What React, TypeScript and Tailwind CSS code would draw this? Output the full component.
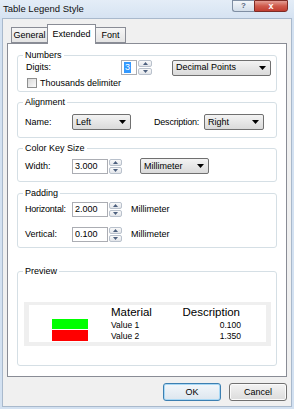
import React from 'react';

// Small Win7-like controls used in the dialog
const Arrow: React.FC<{ up?: boolean }> = ({ up }) => (
  <svg width="5" height="3" viewBox="0 0 5 3" className="block">
    <path d={up ? 'M0 3 L2.5 0 L5 3 Z' : 'M0 0 L5 0 L2.5 3 Z'} fill="#4c5f7d" />
  </svg>
);

const SpinBox: React.FC<{ value: string; w: number; spinW: number; selected?: boolean }> = ({ value, w, spinW, selected }) => (
  <div className="flex items-center gap-[1px]">
    <div
      className="h-[15px] border border-[#abadb3] bg-white flex items-center pl-[2px] text-[9px] leading-[11px]"
      style={{ width: w }}
    >
      {selected ? <span className="bg-[#3399ff] text-white px-[1px]">{value}</span> : value}
    </div>
    <div className="flex flex-col gap-[1px]" style={{ width: spinW }}>
      <div className="h-[7px] border border-[#b9c1cc] rounded-[2px] bg-linear-to-b from-[#fafafa] to-[#e2e5ea] flex items-center justify-center">
        <Arrow up />
      </div>
      <div className="h-[7px] border border-[#b9c1cc] rounded-[2px] bg-linear-to-b from-[#fafafa] to-[#e2e5ea] flex items-center justify-center">
        <Arrow />
      </div>
    </div>
  </div>
);

const Dropdown: React.FC<{ label: string; w: number }> = ({ label, w }) => (
  <div
    className="h-[16px] border border-[#707070] rounded-[2px] bg-linear-to-b from-[#f3f3f3] to-[#dadada] flex items-center pl-[3px] pr-[4px] text-[9px] leading-[11px]"
    style={{ width: w }}
  >
    <span>{label}</span>
    <svg width="7" height="4" viewBox="0 0 7 4" className="ml-auto">
      <path d="M0 0 L7 0 L3.5 4 Z" fill="#000" />
    </svg>
  </div>
);

const Group: React.FC<{ title: string; h: number; className?: string; children: React.ReactNode }> = ({ title, h, className, children }) => (
  <div className={`w-[260px] border border-[#d5dfe5] rounded-[3px] ${className ?? ''}`} style={{ height: h }}>
    <div className="-mt-[6px] ml-[5px] w-fit bg-white px-[2px] text-[9px] leading-[11px]">{title}</div>
    {children}
  </div>
);

const App: React.FC = () => {
  return (
    <div className="w-[294px] h-[409px] bg-[#d3e1f1] flex flex-col overflow-hidden font-['Liberation_Sans',Arial,sans-serif] text-black">
      {/* title bar */}
      <div className="h-[18px] shrink-0 flex items-start bg-linear-to-b from-[#e4edf7] to-[#d6e3f2]">
        <div className="pl-[3px] pt-[3px] text-[9.5px] leading-[11px] text-[#111]">Table Legend Style</div>
        <div className="ml-auto mr-[6px] flex">
          <div className="w-[22px] h-[12px] border border-[#7f8ea3] border-r-0 rounded-bl-[3px] bg-linear-to-b from-[#f3f6fa] to-[#d3dde9] flex items-center justify-center text-[8px] font-bold leading-none text-[#56657a]">
            ?
          </div>
          <div className="w-[34px] h-[12px] border border-[#7d2b25] rounded-br-[3px] bg-linear-to-b from-[#e39d94] via-[#cf5a4c] to-[#c13d30] flex items-center justify-center text-[9px] font-bold leading-none text-white">
            x
          </div>
        </div>
      </div>

      {/* client area */}
      <div className="mx-[2px] h-[389px] border border-[#a9b9cc] bg-[#f0f0f0] flex flex-col pt-[5px]">
        {/* tabs */}
        <div className="relative z-10 h-[19px] flex items-start pl-[8px] text-[9px] leading-[11px]">
          <div className="mt-[3px] w-[36px] h-[16px] border border-[#898c95] border-r-0 bg-linear-to-b from-[#f6f6f6] to-[#e4e4e4] flex items-center justify-center">
            General
          </div>
          <div className="w-[49px] h-[20px] border border-b-0 border-[#898c95] bg-white flex items-center justify-center pb-[1px]">
            Extended
          </div>
          <div className="mt-[3px] w-[30px] h-[16px] border border-[#898c95] border-l-0 bg-linear-to-b from-[#f6f6f6] to-[#e4e4e4] flex items-center justify-center">
            Font
          </div>
        </div>

        {/* tab panel */}
        <div className="ml-[4px] w-[280px] h-[334px] border border-[#898c95] bg-white flex flex-col pl-[9px] pt-[11px]">
          <Group title="Numbers" h={37}>
            <div className="-mt-[2px] flex items-center h-[17px] text-[9px] leading-[11px]">
              <div className="pl-[8px] w-[103px]">Digits:</div>
              <SpinBox value="3" w={16} spinW={14} selected />
              <div className="ml-[20px]">
                <Dropdown label="Decimal Points" w={99} />
              </div>
            </div>
            <div className="mt-[2px] flex items-center h-[10px] pl-[9px] text-[9px] leading-[11px]">
              <div className="w-[10px] h-[10px] border border-[#8e8f8f] bg-linear-to-br from-[#d9d9d9] to-[#fbfbfb]" />
              <span className="ml-[3px]">Thousands delimiter</span>
            </div>
          </Group>

          <Group title="Alignment" h={36} className="mt-[10px]">
            <div className="mt-[6px] flex items-center h-[16px] text-[9px] leading-[11px]">
              <div className="pl-[7px] w-[54px]">Name:</div>
              <Dropdown label="Left" w={59} />
              <div className="ml-[23px] w-[50px] whitespace-nowrap tracking-[-0.2px]">Description:</div>
              <Dropdown label="Right" w={60} />
            </div>
          </Group>

          <Group title="Color Key Size" h={34} className="mt-[10px]">
            <div className="mt-[4px] flex items-center h-[16px] text-[9px] leading-[11px]">
              <div className="pl-[7px] w-[54px]">Width:</div>
              <SpinBox value="3.000" w={36} spinW={13} />
              <div className="ml-[18px]">
                <Dropdown label="Millimeter" w={69} />
              </div>
            </div>
          </Group>

          <Group title="Padding" h={55} className="mt-[11px]">
            <div className="mt-[2px] flex items-center h-[16px] text-[9px] leading-[11px]">
              <div className="pl-[7px] w-[54px] whitespace-nowrap tracking-[-0.2px]">Horizontal:</div>
              <SpinBox value="2.000" w={36} spinW={13} />
              <span className="ml-[9px]">Millimeter</span>
            </div>
            <div className="mt-[9px] flex items-center h-[16px] text-[9px] leading-[11px]">
              <div className="pl-[7px] w-[54px]">Vertical:</div>
              <SpinBox value="0.100" w={36} spinW={13} />
              <span className="ml-[9px]">Millimeter</span>
            </div>
          </Group>

          <Group title="Preview" h={95} className="mt-[23px]">
            <div className="mt-[25px] ml-[6px] w-[247px] h-[44px] border-x-[5px] border-t-[3px] border-b-[4px] border-[#efefef] bg-white flex flex-col">
              <div className="h-[14px] flex items-center">
                <div className="w-[82px]" />
                <div className="w-[130px] flex justify-between pr-[1px] text-[11.5px] leading-[13px]">
                  <span>Material</span>
                  <span>Description</span>
                </div>
              </div>
              <div className="h-[11px] flex items-start">
                <div className="ml-[23px] w-[36px] h-[10px] bg-[#00ff00]" />
                <div className="ml-[23px] w-[130px] h-[11px] flex items-center justify-between text-[8.5px] leading-[10px]">
                  <span>Value 1</span>
                  <span>0.100</span>
                </div>
              </div>
              <div className="h-[11px] flex items-start">
                <div className="ml-[23px] w-[36px] h-[11px] bg-[#ff0000]" />
                <div className="ml-[23px] w-[130px] h-[11px] flex items-center justify-between text-[8.5px] leading-[10px]">
                  <span>Value 2</span>
                  <span>1.350</span>
                </div>
              </div>
            </div>
          </Group>
        </div>

        {/* dialog buttons */}
        <div className="mt-[6px] flex justify-end gap-[8px] pr-[4px] text-[9px] leading-[11px]">
          <div className="w-[58px] h-[18px] rounded-[3px] border border-[#3c7fb1] bg-linear-to-b from-[#f2f7fb] to-[#dde6ee] flex items-center justify-center shadow-[inset_0_0_0_1px_#a8d8f5]">
            OK
          </div>
          <div className="w-[58px] h-[18px] rounded-[3px] border border-[#707070] bg-linear-to-b from-[#f3f3f3] to-[#dcdcdc] flex items-center justify-center shadow-[inset_0_0_0_1px_#fbfbfb]">
            Cancel
          </div>
        </div>
      </div>
    </div>
  );
};

export default App;
